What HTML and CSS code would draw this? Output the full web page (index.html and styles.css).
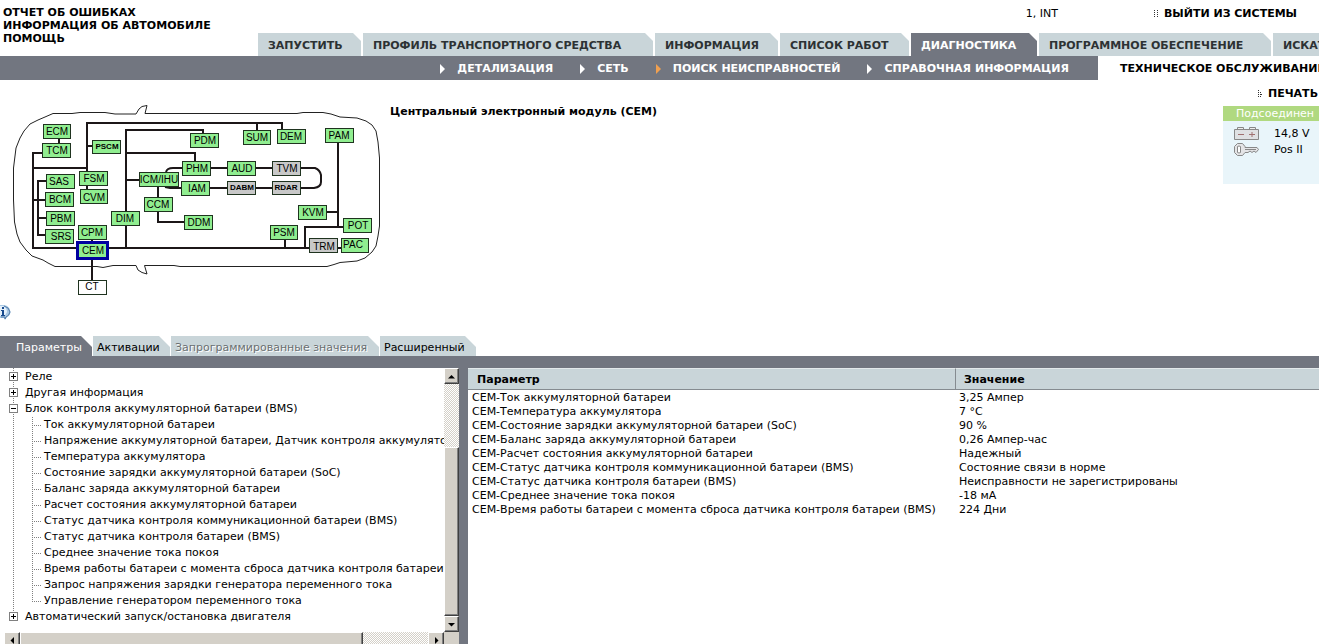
FILE: index.html
```html
<!DOCTYPE html>
<html lang="ru">
<head>
<meta charset="utf-8">
<title>Диагностика</title>
<link rel="stylesheet" href="styles.css">
</head>
<body>
<header class="header">
  <nav class="quick">
    <a href="#">ОТЧЕТ ОБ ОШИБКАХ</a>
    <a href="#">ИНФОРМАЦИЯ ОБ АВТОМОБИЛЕ</a>
    <a href="#">ПОМОЩЬ</a>
  </nav>
  <div class="header-main">
    <div class="session">
      <span class="user">1, INT</span>
      <a class="dotted-link" href="#"><svg class="dots" viewBox="0 0 4 8" aria-hidden="true"><path d="M0 .5h1m2 0h1M0 2.5h1m2 0h1M0 4.5h1m2 0h1M0 6.5h1m2 0h1" stroke="#333"/></svg>ВЫЙТИ ИЗ СИСТЕМЫ</a>
    </div>
    <nav class="tabs">
      <a class="tab" href="#">ЗАПУСТИТЬ</a>
      <a class="tab" href="#">ПРОФИЛЬ ТРАНСПОРТНОГО СРЕДСТВА</a>
      <a class="tab" href="#">ИНФОРМАЦИЯ</a>
      <a class="tab" href="#">СПИСОК РАБОТ</a>
      <a class="tab tab-active" href="#">ДИАГНОСТИКА</a>
      <a class="tab" href="#">ПРОГРАММНОЕ ОБЕСПЕЧЕНИЕ</a>
      <a class="tab" href="#">ИСКАТЬ</a>
    </nav>
  </div>
</header>
<div class="subbar">
  <nav class="subnav">
    <a href="#">ДЕТАЛИЗАЦИЯ</a>
    <a href="#">СЕТЬ</a>
    <a class="current" href="#">ПОИСК НЕИСПРАВНОСТЕЙ</a>
    <a href="#">СПРАВОЧНАЯ ИНФОРМАЦИЯ</a>
  </nav>
  <a class="service" href="#">ТЕХНИЧЕСКОЕ ОБСЛУЖИВАНИЕ</a>
</div>

<section class="overview">
  <div class="network">
    <svg class="diagram" viewBox="0 100 390 200" role="img" aria-label="Схема сети автомобиля">
      <path class="car" d="M53 113.500L45 117L38 120L30 124L24 131L20 138L16 148L15 156L13.500 168V200L14.500 222L17 234L20 242L26 250L32 256L43 260L48 263L55 266.500H97L103 267.500L113 265.500H136L138 270L142 272.500L147 274L144.500 265.500H174L180 266.500H327L334 264.500L340 262.500L357 261L365 258L372 252L376 246L378 236L379.500 226V158L378 142L376 131L372 125L366 121L357 118L340 117L331 114L323 112.500H303L297 113.500H145L147 105.500L142 106.500L139 109L136 114H115L105 112.500H80L72 113.500Z"/>
      <path class="wire" d="M43 153H33V248H309M33 168H87M87 171V123H282V129M257 123V130M87 146H93M59 139V143M126 248V130H203V133M126 153H195V161M126 180H139M46 181H38V235H46M33 200H45M38 218H46M87 186V190M92 239V243M92 259V280M166 172Q167 168 173 168H182M165 187L170 188H314Q321 187 321 182V175Q320 170 315 168H210M158 187V197M158 211V222H185M338 142V227M327 212H338M343 227H305V248M285 239V248M337 248H342"/>
      <g class="node">
        <a href="#"><rect x="43.500" y="124.500" width="27" height="14"/><text x="57" y="135">ECM</text></a>
        <a href="#"><rect x="42.500" y="143.500" width="28" height="14"/><text x="57" y="154">TCM</text></a>
        <a href="#" class="dense"><rect x="92.500" y="140.500" width="28" height="13"/><text x="107" y="149">PSCM</text></a>
        <a href="#"><rect x="79.500" y="171.500" width="28" height="14"/><text x="94" y="182">FSM</text></a>
        <a href="#"><rect x="46.500" y="174.500" width="28" height="14"/><text x="59" y="185">SAS</text></a>
        <a href="#"><rect x="45.500" y="192.500" width="28" height="14"/><text x="60" y="203">BCM</text></a>
        <a href="#"><rect x="80.500" y="189.500" width="27" height="14"/><text x="94" y="201">CVM</text></a>
        <a href="#"><rect x="139.500" y="172.500" width="39" height="14"/><text x="159" y="183">ICM/IHU</text></a>
        <a href="#"><rect x="190.500" y="133.500" width="28" height="14"/><text x="205" y="144">PDM</text></a>
        <a href="#"><rect x="182.500" y="161.500" width="28" height="14"/><text x="197" y="172">PHM</text></a>
        <a href="#"><rect x="181.500" y="181.500" width="28" height="14"/><text x="197" y="192">IAM</text></a>
        <a href="#"><rect x="243.500" y="130.500" width="27" height="14"/><text x="257" y="141">SUM</text></a>
        <a href="#"><rect x="277.500" y="129.500" width="28" height="14"/><text x="291" y="140">DEM</text></a>
        <a href="#"><rect x="325.500" y="128.500" width="28" height="14"/><text x="339" y="139">PAM</text></a>
        <a href="#"><rect x="227.500" y="161.500" width="28" height="14"/><text x="242" y="172">AUD</text></a>
        <a href="#"><rect x="144.500" y="197.500" width="28" height="14"/><text x="158" y="208">CCM</text></a>
        <a href="#"><rect x="111.500" y="211.500" width="28" height="14"/><text x="125" y="222">DIM</text></a>
        <a href="#"><rect x="46.500" y="211.500" width="28" height="14"/><text x="61" y="222">PBM</text></a>
        <a href="#"><rect x="45.500" y="229.500" width="28" height="14"/><text x="61" y="240">SRS</text></a>
        <a href="#"><rect x="78.500" y="225.500" width="28" height="14"/><text x="92" y="236">CPM</text></a>
        <a href="#"><rect x="184.500" y="215.500" width="28" height="14"/><text x="199" y="226">DDM</text></a>
        <a href="#"><rect x="298.500" y="205.500" width="28" height="14"/><text x="313" y="216">KVM</text></a>
        <a href="#"><rect x="270.500" y="225.500" width="27" height="14"/><text x="284" y="236">PSM</text></a>
        <a href="#"><rect x="343.500" y="218.500" width="28" height="14"/><text x="358" y="229">POT</text></a>
        <a href="#"><rect x="341.500" y="238.500" width="27" height="14"/><text x="353" y="248">PAC</text></a>
        <a href="#" class="selected"><rect x="77.500" y="242.500" width="30" height="16"/><text x="93" y="254">CEM</text></a>
        <a href="#" class="off"><rect x="272.500" y="161.500" width="28" height="14"/><text x="287" y="172">TVM</text></a>
        <a href="#" class="off dense"><rect x="227.500" y="181.500" width="28" height="13"/><text x="242" y="190">DABM</text></a>
        <a href="#" class="off dense"><rect x="272.500" y="181.500" width="28" height="13"/><text x="286" y="190">RDAR</text></a>
        <a href="#" class="off"><rect x="309.500" y="238.500" width="28" height="14"/><text x="324" y="250">TRM</text></a>
        <a href="#" class="plain"><rect x="78.500" y="280.500" width="28" height="14"/><text x="92" y="290">CT</text></a>
      </g>
    </svg>
    <a class="info" href="#" aria-label="Информация"><svg viewBox="0 0 12 17"><path d="M0 1H4Q10 2 10.500 8Q10 12 7 13L5 16L4 14H0Z" fill="#a9c8e4"/><path d="M4 2Q9 3 10 8Q9 12 6 13L5 15V13H1" fill="none" stroke="#517ba8"/><path d="M0 2H3Q7 4 7 8Q6 11 3 12H0Z" fill="#e6f1fa"/><path d="M2 3H4V5H2ZM1 6H4V11H5V12H1V11H2V7H1Z" fill="#174a8f"/></svg></a>
  </div>
  <h1 class="title">Центральный электронный модуль (CEM)</h1>
  <aside class="side">
    <a class="dotted-link print" href="#"><svg class="dots" viewBox="0 0 4 8" aria-hidden="true"><path d="M0 .5h1M0 2.500h1m1 0h1M0 4.500h1m1 0h1m0 0h1M0 6.500h1m1 0h1" stroke="#333"/></svg>ПЕЧАТЬ</a>
    <div class="status">
      <div class="status-head">Подсоединен</div>
      <div class="status-row">
        <svg viewBox="0 0 25 14" aria-hidden="true"><path d="M.5 2.500H24.500V12.500H.5Z" fill="#dfe1e3" stroke="#888"/><path d="M3.500 2V.5H9.500V2M15.500 2V.5H21.500V2" fill="#eee" stroke="#888"/><path d="M4 7.500H10M15 7.500H21M18 5V10" stroke="#a07070"/></svg>
        <span>14,8 V</span>
      </div>
      <div class="status-row">
        <svg viewBox="0 0 25 14" aria-hidden="true"><path d="M3.500 .5H8.500L11 3.500V4.500H23L24.500 6.500L22 9.500L20 8L18 9.500L16 8L14 9.500H11L8.500 12.500H3.500L.5 9.500V3.500Z" fill="#e4e4e6" stroke="#888"/><path d="M3.500 3.500Q5 2.500 6.500 3.500V9.500Q5 10.500 3.500 9.500ZM11 6.500H22" fill="#fff" stroke="#888"/></svg>
        <span>Pos II</span>
      </div>
    </div>
  </aside>
</section>

<nav class="view-tabs">
  <a class="view-tab view-active" href="#">Параметры</a>
  <a class="view-tab" href="#">Активации</a>
  <a class="view-tab view-disabled" href="#">Запрограммированные значения</a>
  <a class="view-tab" href="#">Расширенный</a>
</nav>
<main class="workspace">
  <div class="tree-pane">
    <ul class="tree">
      <li><button class="toggle" aria-label="Развернуть"></button>Реле</li>
      <li><button class="toggle" aria-label="Развернуть"></button>Другая информация</li>
      <li><button class="toggle open" aria-label="Свернуть"></button>Блок контроля аккумуляторной батареи (BMS)
        <ul class="branch">
          <li>Ток аккумуляторной батареи</li>
          <li>Напряжение аккумуляторной батареи, Датчик контроля аккумулятора</li>
          <li>Температура аккумулятора</li>
          <li>Состояние зарядки аккумуляторной батареи (SoC)</li>
          <li>Баланс заряда аккумуляторной батареи</li>
          <li>Расчет состояния аккумуляторной батареи</li>
          <li>Статус датчика контроля коммуникационной батареи (BMS)</li>
          <li>Статус датчика контроля батареи (BMS)</li>
          <li>Среднее значение тока покоя</li>
          <li>Время работы батареи с момента сброса датчика контроля батареи</li>
          <li>Запрос напряжения зарядки генератора переменного тока</li>
          <li>Управление генератором переменного тока</li>
        </ul>
      </li>
      <li><button class="toggle" aria-label="Развернуть"></button>Автоматический запуск/остановка двигателя</li>
    </ul>
    <div class="scroll scroll-v">
      <button class="scroll-button" aria-label="Вверх"><svg viewBox="0 0 7 7"><path d="M0 5.500L3.500 2L7 5.500Z"/></svg></button>
      <div class="thumb"></div>
      <button class="scroll-button" aria-label="Вниз"><svg viewBox="0 0 7 7"><path d="M0 2L3.500 5.500L7 2Z"/></svg></button>
    </div>
    <div class="scroll scroll-h">
      <button class="scroll-button" aria-label="Влево"><svg viewBox="0 0 7 7"><path d="M5 0L1.500 3.500L5 7Z"/></svg></button>
      <div class="thumb"></div>
      <button class="scroll-button" aria-label="Вправо"><svg viewBox="0 0 7 7"><path d="M2 0L5.500 3.500L2 7Z"/></svg></button>
    </div>
    <div class="corner"></div>
  </div>
  <div class="values-pane">
    <table class="values">
      <thead><tr><th class="name">Параметр</th><th>Значение</th></tr></thead>
      <tbody>
        <tr><td>CEM-Ток аккумуляторной батареи</td><td>3,25 Ампер</td></tr>
        <tr><td>CEM-Температура аккумулятора</td><td>7 °C</td></tr>
        <tr><td>CEM-Состояние зарядки аккумуляторной батареи (SoC)</td><td>90 %</td></tr>
        <tr><td>CEM-Баланс заряда аккумуляторной батареи</td><td>0,26 Ампер-час</td></tr>
        <tr><td>CEM-Расчет состояния аккумуляторной батареи</td><td>Надежный</td></tr>
        <tr><td>CEM-Статус датчика контроля коммуникационной батареи (BMS)</td><td>Состояние связи в норме</td></tr>
        <tr><td>CEM-Статус датчика контроля батареи (BMS)</td><td>Неисправности не зарегистрированы</td></tr>
        <tr><td>CEM-Среднее значение тока покоя</td><td>-18 мА</td></tr>
        <tr><td>CEM-Время работы батареи с момента сброса датчика контроля батареи (BMS)</td><td>224 Дни</td></tr>
      </tbody>
    </table>
  </div>
</main>
</body>
</html>
```
FILE: styles.css
```css
* { box-sizing: border-box; }

:root {
  --slate: #727680;
  --mist: #c9d5d9;
  --chrome: #d4d0c8;
}

body {
  margin: 0;
  min-height: 100vh;
  display: flex;
  flex-direction: column;
  overflow: hidden;
  background: #fff;
  color: #000;
  font: 11px/14px "DejaVu Sans", sans-serif;
  white-space: nowrap;
}

a { color: inherit; text-decoration: none; }
button { padding: 0; border: 0; }

.header { display: grid; grid-template-columns: 258px minmax(0, 1fr); }
.quick {
  display: flex;
  flex-direction: column;
  padding: 6px 3px;
  font-weight: bold;
  line-height: 13px;
}
.header-main { display: flex; flex-direction: column; }
.session {
  display: flex;
  justify-content: flex-end;
  gap: 96px;
  padding: 7px 22px 0 0;
  height: 33px;
}
.dotted-link {
  display: flex;
  align-items: center;
  gap: 6px;
  height: 14px;
  font-weight: bold;
}
.dots { width: 4px; height: 8px; }

.tabs {
  display: grid;
  grid-template-columns: 103px 290px 123px 129px 126px 232px 110px;
  gap: 2px;
}
.tab {
  height: 23px;
  padding: 0 10px;
  background: var(--mist);
  color: #2d3234;
  font-weight: bold;
  line-height: 25px;
  clip-path: polygon(0 0, calc(100% - 8px) 0, 100% 8px, 100% 100%, 0 100%);
}
.tab-active { background: var(--slate); color: #fff; }

.subbar {
  display: grid;
  grid-template-columns: minmax(0, 1fr) 221px;
  font-weight: bold;
  line-height: 22px;
}
.subnav {
  display: flex;
  justify-content: flex-end;
  gap: 27px;
  padding: 2px 29px 0 0;
  background: var(--slate);
  color: #fff;
}
.subnav a { display: flex; align-items: center; gap: 12px; }
.subnav a::before {
  content: "";
  border: solid transparent;
  border-width: 5px 0 5px 5px;
  border-left-color: #fff;
}
.subnav .current::before { border-left-color: #f0a050; }
.service { padding: 2px 0 0 22px; }

.overview {
  display: grid;
  grid-template-columns: 390px minmax(0, 1fr) 96px;
  height: 256px;
}
.network { display: flex; flex-direction: column; gap: 4px; padding-top: 20px; }
.diagram { display: block; width: 390px; height: 200px; }
.car { fill: none; stroke: #222; }
.wire { fill: none; stroke: #1c1718; stroke-width: 2; }
.node rect { fill: #90ee90; stroke: #1f331f; }
.node text { font: 10px "Liberation Sans", sans-serif; text-anchor: middle; }
.node .dense text { font-size: 8px; font-weight: bold; }
.node .off rect { fill: #c8c8c8; }
.node .plain rect { fill: #fff; }
.node .selected rect { stroke: #0000a0; stroke-width: 3; }
.info { width: 12px; height: 17px; }
.info svg { display: block; }
.title { margin: 25px 0 0; font-size: 11px; line-height: 14px; }

.side { padding-top: 7px; }
.print { padding-left: 35px; }
.status { margin-top: 5px; height: 78px; background: #e9f5fa; }
.status-head {
  margin-bottom: 5px;
  padding-left: 13px;
  background: #b0d980;
  color: #fff;
  line-height: 15px;
}
.status-row {
  display: flex;
  align-items: center;
  gap: 15px;
  height: 16px;
  padding-left: 11px;
}
.status-row svg { width: 25px; height: 14px; }

.view-tabs { display: grid; grid-template-columns: 92px 77px 208px 96px; gap: 1px; }
.view-tab {
  padding-left: 4px;
  background: var(--mist);
  line-height: 24px;
  height: 20px;
  clip-path: polygon(0 0, calc(100% - 11px) 0, 100% 11px, 100% 100%, 0 100%);
}
.view-active { padding-left: 16px; background: var(--slate); color: #fff; }
.view-disabled { color: #6a7072; text-shadow: 1px 1px #fff; }

.workspace {
  flex: 1;
  display: grid;
  grid-template-columns: 459px minmax(0, 1fr);
  gap: 9px;
  border-top: 12px solid var(--slate);
  background: var(--slate);
  max-height: calc(100vh - 356px);
}
.tree-pane {
  display: grid;
  grid-template-columns: 444px 15px;
  grid-template-rows: 264px 16px;
  background: #fff;
  overflow: hidden;
}
.tree, .branch { margin: 0; padding: 0; list-style: none; line-height: 16px; }
.tree {
  overflow: hidden;
  padding: 1px 0 0 9px;
  background: repeating-linear-gradient(#808080 0 1px, #fff 1px 2px) 13px 0 / 1px 248px no-repeat;
}
.toggle {
  width: 9px;
  height: 9px;
  margin-right: 7px;
  border: 1px solid #808080;
  background:
    linear-gradient(#000 0 0) center / 5px 1px no-repeat,
    linear-gradient(#000 0 0) center / 1px 5px no-repeat,
    #fff;
  outline: 0;
}
.toggle.open { background: linear-gradient(#000 0 0) center / 5px 1px no-repeat, #fff; }
.branch {
  margin-left: 23px;
  background: repeating-linear-gradient(#808080 0 1px, #fff 1px 2px) 0 0 / 1px 185px no-repeat;
}
.branch li {
  overflow: hidden;
  padding-left: 12px;
  background: repeating-linear-gradient(90deg, #808080 0 1px, #fff 1px 2px) 0 8px / 9px 1px no-repeat;
}

.scroll {
  display: grid;
  background: repeating-conic-gradient(#d4d0c8 0 25%, #fff 0 50%) 0 0 / 2px 2px;
}
.scroll-v { grid-template-rows: 16px 1fr 16px; }
.scroll-v .thumb { margin-top: 63px; }
.scroll-h { grid-template-columns: 16px 1fr 16px; margin-left: 4px; }
.scroll-h .thumb { margin-right: 65px; }
.scroll-button, .thumb, .corner { background: var(--chrome); }
.scroll-button, .thumb {
  border: 1px solid;
  border-color: #fff #404040 #404040 #fff;
  box-shadow: inset -1px -1px #808080;
}
.scroll-button { display: grid; place-items: center; }
.scroll-button svg { width: 7px; height: 7px; }

.values-pane { background: #fff; overflow: hidden; }
.values { width: 100%; border-collapse: separate; border-spacing: 0; table-layout: fixed; }
.values th {
  height: 22px;
  padding: 2px 9px 0;
  border-top: 1px solid #e4eaec;
  border-bottom: 1px solid #858b90;
  background: var(--mist);
  text-align: left;
}
.values .name { width: 488px; border-right: 1px solid #858b90; }
.values th:last-child { padding-left: 8px; }
.values td { padding: 2px 4px 0; line-height: 12px; }
.values td:last-child { padding-left: 3px; }
```
